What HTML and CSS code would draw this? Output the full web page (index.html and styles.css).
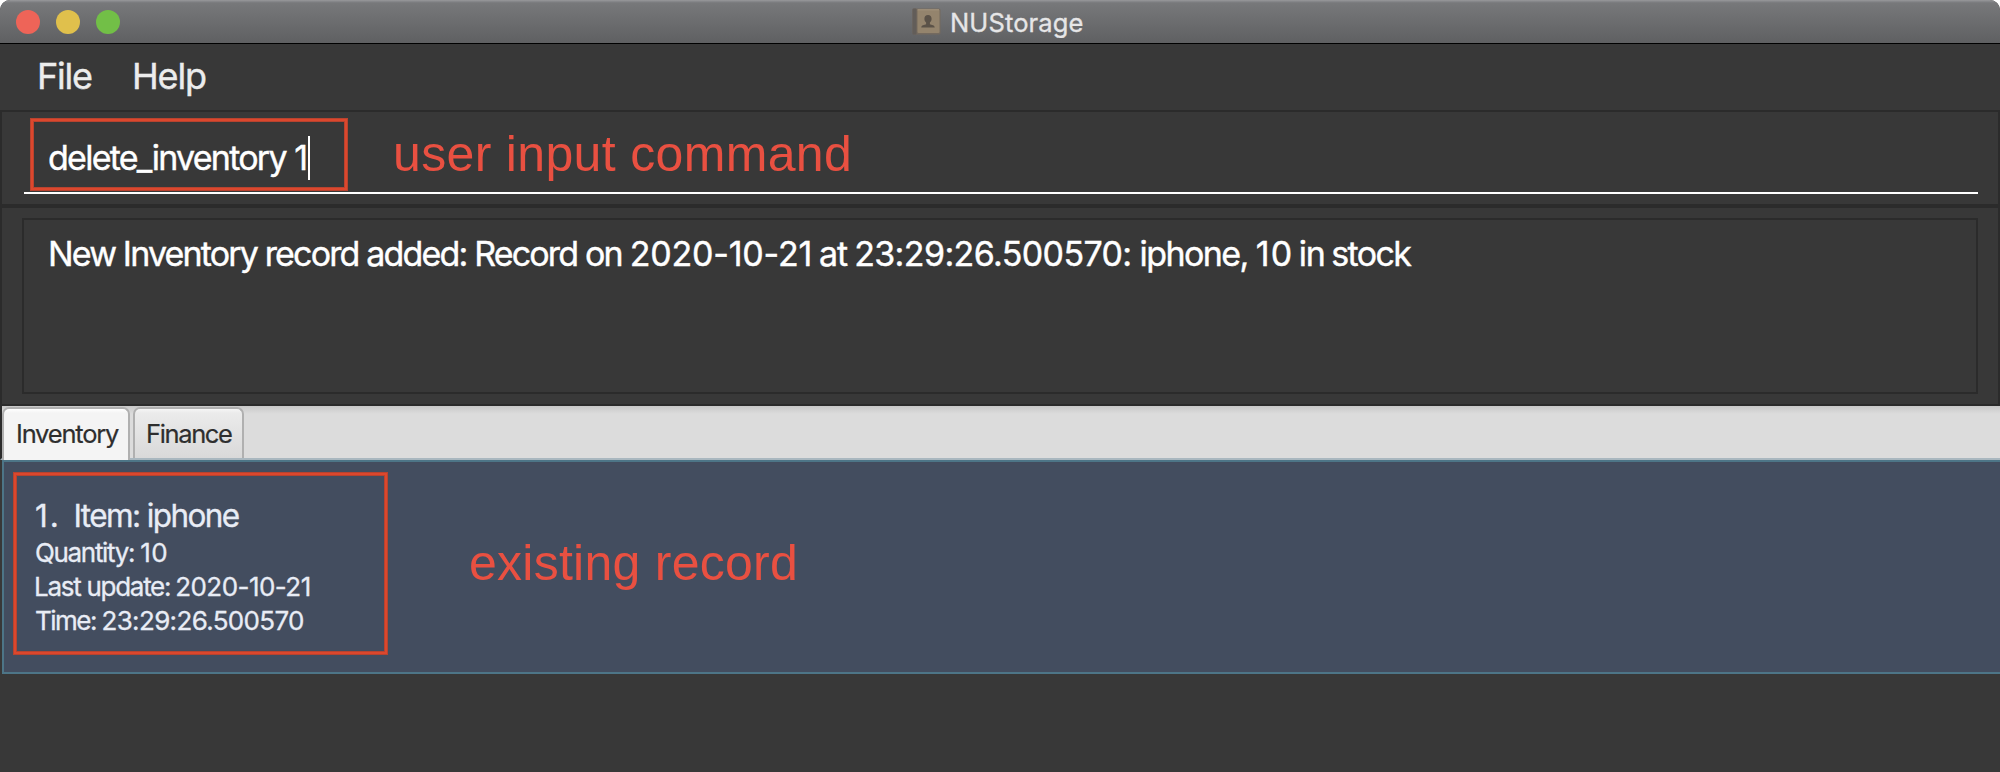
FILE: index.html
```html
<!DOCTYPE html>
<html lang="en">
<head>
<meta charset="utf-8">
<title>NUStorage</title>
<link rel="stylesheet" href="styles.css">
</head>
<body>
<div class="window">
  <header class="titlebar">
    <div class="lights"><i class="red"></i><i class="yellow"></i><i class="green"></i></div>
    <svg class="book" width="29" height="27" viewBox="0 0 29 27">
      <rect x="0.5" y="0.5" width="28" height="26" rx="1.5" fill="#746a5f"/>
      <rect x="0.5" y="0.5" width="4" height="26" rx="1" fill="#625d59"/>
      <rect x="5.5" y="1.5" width="22" height="23.5" rx="1" fill="#94846d"/>
      <path d="M5.500 1.800H27" stroke="#a5967f" stroke-width="1"/>
      <path d="M16 7c2.300 0 3.600 1.500 3.600 3.800 0 1.600-.700 3-1.700 3.700v1.800c1.700.500 4.800 1 4.800 3.200H9.300c0-2.200 3.100-2.700 4.800-3.200v-1.800c-1-.700-1.700-2.100-1.700-3.700C12.400 8.500 13.700 7 16 7z" fill="#5b5248"/>
    </svg>
    <span class="title">NUStorage</span>
  </header>
  <nav class="menu"><span class="file">File</span><span class="help">Help</span></nav>
  <section class="command">
    <div class="field"><span>delete_inventory</span><span class="arg">1</span><i class="caret"></i></div>
    <div class="mark mark-command"></div>
    <div class="note note-command">user input command</div>
  </section>
  <section class="result">
    <div class="display">
      <span class="r1">New Inventory record added: Record on</span><span class="r2">2020-10-21</span><span class="r3">at</span><span class="r4">23:29:26.500570:</span><span class="r5">iphone,</span><span class="r6">10</span><span class="r7">in</span><span class="r8">stock</span>
    </div>
  </section>
  <div class="tabs"><div class="tab active">Inventory</div><div class="tab other">Finance</div></div>
  <main class="list">
    <div class="cell">
      <div class="item"><span class="num">1.</span><span>Item: iphone</span></div>
      <div class="row"><span class="k1">Quantity:</span><span class="v1">10</span></div>
      <div class="row"><span class="k2">Last update:</span><span class="v2">2020-10-21</span></div>
      <div class="row"><span class="k3">Time:</span><span class="v3">23:29:26.500570</span></div>
      <div class="mark mark-record"></div>
      <div class="note note-record">existing record</div>
    </div>
  </main>
</div>
</body>
</html>
```
FILE: styles.css
```css
* { box-sizing: border-box; }
body { margin: 0; background: #fff; font-family: Inter, "Liberation Sans", sans-serif; white-space: nowrap; }
.window { width: 2000px; height: 772px; background: #383838; border-radius: 10px 10px 0 0; overflow: hidden; }

.titlebar { height: 44px; display: flex; align-items: center; padding-left: 16px; border-bottom: 1px solid #000; background: linear-gradient(#99999b 0, #808184 2px, #77787a 3px, #5f6062 100%); }
.lights { display: flex; gap: 16px; width: 896px; }
.lights i { width: 24px; height: 24px; border-radius: 50%; }
.red { background: #ee6458; }
.yellow { background: #e0c04c; }
.green { background: #72bf47; }
.book { display: block; }
.title { margin-left: 9px; padding-top: 2px; font-size: 25.5px; line-height: 40px; letter-spacing: .13px; color: #e6e6e7; -webkit-text-stroke: .3px #e6e6e7; }

.menu { height: 66px; line-height: 65px; display: flex; padding-left: 37px; font-size: 36px; color: #ececec; -webkit-text-stroke: .4px #ececec; }
.file { width: 95px; letter-spacing: -1.23px; }
.help { letter-spacing: -1.15px; }

.command { position: relative; height: 96px; border: 2px solid #2b2b2b; padding: 0 20px 0 22px; }
.field { height: 82px; border-bottom: 2px solid #fff; padding: 24px 0 0 24px; display: flex; font-size: 34px; line-height: 44px; letter-spacing: -1.75px; color: #fff; -webkit-text-stroke: .4px #fff; }
.arg { margin-left: 8.5px; letter-spacing: 0; }
.caret { width: 2px; height: 44px; background: #fff; }

.result { height: 200px; border: 2px solid #2b2b2b; padding: 10px 20px; }
.display { height: 176px; border: 2px solid #2b2b2b; padding: 12px 24px; display: flex; font-size: 34px; line-height: 44px; color: #fff; -webkit-text-stroke: .4px #fff; }
.r1 { letter-spacing: -1.84px; }
.r2 { letter-spacing: -.2px; margin-left: 8px; }
.r3 { letter-spacing: -1.09px; margin-left: 7px; }
.r4 { letter-spacing: -.62px; margin-left: 7px; }
.r5 { letter-spacing: -1.58px; margin-left: 8px; }
.r6 { letter-spacing: 1.17px; margin-left: 8px; }
.r7 { letter-spacing: -1.23px; margin-left: 5.5px; }
.r8 { letter-spacing: -1.64px; margin-left: 6.5px; }

.tabs { height: 54px; display: flex; gap: 3px; padding: 1px 0 0; border-left: 2px solid #2b2b2b; border-bottom: 2px solid #a9b7bf; background: linear-gradient(#c8c8c8, #dcdcdc 8px); font-size: 25.5px; line-height: 50px; color: #2e2e2e; -webkit-text-stroke: .2px #2e2e2e; }
.tab { height: 51px; border: 2px solid #b0b0b0; border-bottom: 0; border-radius: 7px 7px 0 0; }
.active { width: 128px; height: 53px; padding-left: 12px; letter-spacing: -1.21px; background: linear-gradient(#fff, #f4f4f4 4px); }
.other { width: 111px; padding-left: 11px; letter-spacing: -1.37px; background: linear-gradient(#f5f5f5, #ebebeb 4px, #d9d9d9); }

.list { padding-left: 2px; }
.cell { position: relative; height: 214px; border: 2px solid #4d7587; border-right: 0; background: #434d5f; padding: 34px 0 0 31px; color: #e8ecf5; font-size: 26px; -webkit-text-stroke: .3px #e8ecf5; }
.item { display: flex; height: 39px; line-height: 40px; font-size: 31.5px; letter-spacing: -1.6px; }
.num { width: 38.5px; letter-spacing: 2px; }
.row { display: flex; height: 34px; line-height: 35px; }
.k1 { letter-spacing: -1.33px; }
.v1 { letter-spacing: .42px; margin-left: 6px; }
.k2 { letter-spacing: -1.28px; margin-left: -1px; }
.v2 { letter-spacing: -.55px; margin-left: 5px; }
.k3 { letter-spacing: -1.5px; }
.v3 { letter-spacing: -.66px; margin-left: 5.5px; }

.mark { position: absolute; border: 2px solid #dc472d; box-shadow: 0 0 0 1px #b8432f, inset 0 0 0 1px #b8432f; }
.mark-command { left: 29px; top: 7px; width: 316px; height: 71px; }
.mark-record { left: 10px; top: 11px; width: 373px; height: 181px; }
.note { position: absolute; font: 50px/60px "Liberation Sans", Arial, sans-serif; color: #e95041; -webkit-text-stroke: 0; }
.note-command { left: 391px; top: 12px; letter-spacing: .34px; }
.note-record { left: 465px; top: 71px; letter-spacing: .26px; }
```
